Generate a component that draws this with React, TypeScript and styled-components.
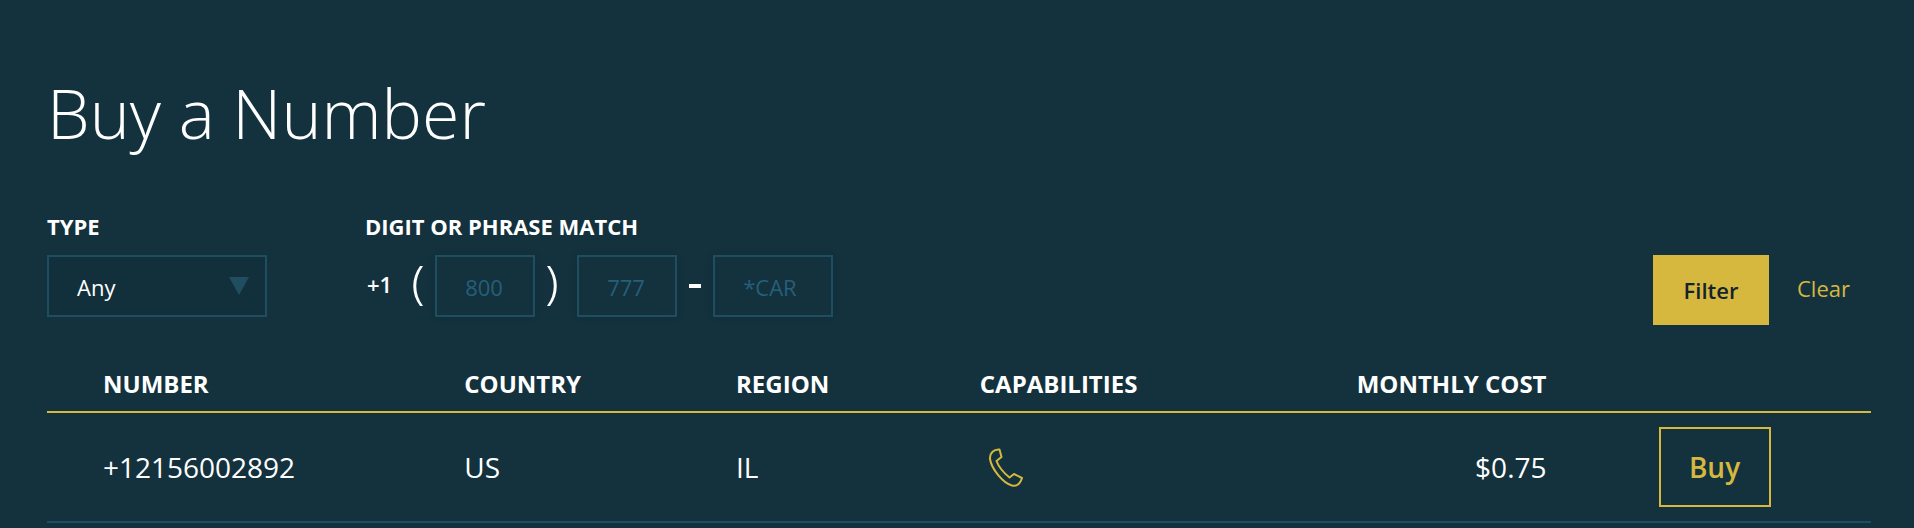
import React from 'react';
import styled, { createGlobalStyle } from 'styled-components';

const colors = {
  background: '#13323e',
  field: '#12303c',
  outline: '#1f4e61',
  placeholder: '#265f7a',
  accent: '#d6b83f',
  dark: '#14232d',
  text: '#ffffff',
};

const GlobalStyle = createGlobalStyle`
  *, *::before, *::after { box-sizing: border-box; }
  body {
    margin: 0;
    background: ${colors.background};
    color: ${colors.text};
    font-family: 'Open Sans', 'Noto Sans', sans-serif;
    font-size: 22px;
    line-height: 30px;
  }
  button, input, select { font: inherit; margin: 0; }
`;

const Page = styled.main`
  padding: 66px 43px 0 47px;
`;

const Title = styled.h1`
  margin: 0 0 51px;
  font-size: 68px;
  font-weight: 300;
  line-height: 94px;
`;

const FilterBar = styled.form`
  display: flex;
  align-items: flex-start;
  gap: 98px;
  margin-bottom: 42px;
`;

const Field = styled.div`
  display: flex;
  flex-direction: column;
  gap: 14px;
`;

const PhraseField = styled.fieldset`
  margin: 0;
  padding: 0;
  border: 0;
  min-width: 0;
`;

const Label = styled.label`
  font-weight: 700;
`;

const Legend = styled.legend`
  margin-bottom: 14px;
  padding: 0;
  font-weight: 700;
`;

const SelectBox = styled.div`
  display: grid;
  align-items: center;
  width: 220px;

  > * { grid-area: 1 / 1; }
`;

const Select = styled.select`
  width: 100%;
  height: 62px;
  padding: 2px 28px 0;
  appearance: none;
  border: 2px solid ${colors.outline};
  border-radius: 0;
  background: ${colors.field};
  color: ${colors.text};
`;

const Arrow = styled.svg`
  justify-self: end;
  margin-right: 18px;
  pointer-events: none;
`;

const PhraseRow = styled.div`
  display: flex;
  align-items: center;
  height: 62px;
`;

const Prefix = styled.span`
  margin-right: 21px;
  padding: 0 0 4px 2px;
  font-weight: 600;
`;

const Paren = styled.svg<{ $closing?: boolean }>`
  flex: none;
  margin: ${(p) => (p.$closing ? '0 20px 0 12px' : '0 12px 0 0')};
`;

const Dash = styled.span`
  width: 12px;
  height: 4px;
  margin: 0 12px;
  background: ${colors.text};
`;

const DigitInput = styled.input<{ $wide?: boolean }>`
  width: ${(p) => (p.$wide ? 120 : 100)}px;
  height: 62px;
  padding: 2px 28px 0;
  border: 2px solid ${colors.outline};
  border-radius: 0;
  background: transparent;
  box-shadow: 0 0 8px rgba(0, 0, 0, 0.12);
  color: ${colors.text};

  &::placeholder { color: ${colors.placeholder}; opacity: 1; }
`;

const Actions = styled.div`
  display: flex;
  align-items: center;
  gap: 28px;
  margin: 44px 21px 0 auto;
`;

const FilterButton = styled.button`
  min-width: 116px;
  height: 70px;
  padding: 0 28px;
  border: 0;
  background: ${colors.accent};
  color: ${colors.dark};
  font-weight: 600;
`;

const ClearLink = styled.a`
  padding-bottom: 4px;
  color: ${colors.accent};
  text-decoration: none;
`;

const Table = styled.table`
  width: 100%;
  border-collapse: separate;
  border-spacing: 0;
`;

const HeadCell = styled.th<{ $right?: boolean }>`
  padding: 0 56px 10px;
  border-bottom: 2px solid ${colors.accent};
  font-size: 24px;
  font-weight: 700;
  line-height: 34px;
  text-align: ${(p) => (p.$right ? 'right' : 'left')};
  white-space: nowrap;
`;

const Cell = styled.td<{ $right?: boolean }>`
  height: 110px;
  padding: 0 56px;
  border-bottom: 2px solid ${colors.outline};
  font-size: 28px;
  line-height: 38px;
  text-align: ${(p) => (p.$right ? 'right' : 'left')};
  vertical-align: middle;
  white-space: nowrap;

  &:last-child { padding-right: 58px; }
`;

const PhoneIcon = styled.svg`
  display: block;
  margin-left: 7px;
`;

const BuyButton = styled.button`
  display: block;
  min-width: 112px;
  height: 80px;
  padding: 0 28px;
  border: 2px solid ${colors.accent};
  background: transparent;
  color: ${colors.accent};
  font-weight: 600;
`;

const numbers = [{ number: '+12156002892', country: 'US', region: 'IL', cost: '$0.75' }];

export default function App() {
  return (
    <>
      <GlobalStyle />
      <Page>
        <Title>Buy a Number</Title>
        <FilterBar onSubmit={(e) => e.preventDefault()}>
          <Field>
            <Label htmlFor="type">TYPE</Label>
            <SelectBox>
              <Select id="type" defaultValue="any">
                <option value="any">Any</option>
              </Select>
              <Arrow width="20" height="18" viewBox="0 0 20 18" aria-hidden="true">
                <path d="M0 0H20L10 18Z" fill={colors.outline} />
              </Arrow>
            </SelectBox>
          </Field>
          <PhraseField>
            <Legend>DIGIT OR PHRASE MATCH</Legend>
            <PhraseRow>
              <Prefix>+1</Prefix>
              <Paren width="10" height="42" viewBox="0 0 10 42" fill={colors.text} aria-hidden="true">
                <path d="M7 1C-2 13 -2 29 7 41H10C1 29 1 13 10 1Z" />
              </Paren>
              <DigitInput aria-label="Area code" placeholder="800" />
              <Paren $closing width="10" height="42" viewBox="0 0 10 42" fill={colors.text} aria-hidden="true">
                <path d="M3 1C12 13 12 29 3 41H0C9 29 9 13 0 1Z" />
              </Paren>
              <DigitInput aria-label="Prefix" placeholder="777" />
              <Dash aria-hidden="true" />
              <DigitInput aria-label="Line number or phrase" placeholder="*CAR" $wide />
            </PhraseRow>
          </PhraseField>
          <Actions>
            <FilterButton type="submit">Filter</FilterButton>
            <ClearLink href="#">Clear</ClearLink>
          </Actions>
        </FilterBar>
        <Table>
          <thead>
            <tr>
              <HeadCell scope="col">NUMBER</HeadCell>
              <HeadCell scope="col">COUNTRY</HeadCell>
              <HeadCell scope="col">REGION</HeadCell>
              <HeadCell scope="col">CAPABILITIES</HeadCell>
              <HeadCell scope="col" $right>MONTHLY COST</HeadCell>
              <HeadCell as="td" />
            </tr>
          </thead>
          <tbody>
            {numbers.map((n) => (
              <tr key={n.number}>
                <Cell>{n.number}</Cell>
                <Cell>{n.country}</Cell>
                <Cell>{n.region}</Cell>
                <Cell>
                  <PhoneIcon width="37" height="40" viewBox="0 0 37 40" fill="none" stroke={colors.accent} strokeWidth="2" strokeLinejoin="round" role="img" aria-label="Voice">
                    <path d="M12.5 2.5C7 2 2.5 6 3 12C4.5 22 16 36 25 38.5C30 39.5 33.5 36 35 31L27 27L22.5 30.5C17.5 26.5 12 20.5 9.5 14L14.5 10Z" />
                  </PhoneIcon>
                </Cell>
                <Cell $right>{n.cost}</Cell>
                <Cell>
                  <BuyButton type="button">Buy</BuyButton>
                </Cell>
              </tr>
            ))}
          </tbody>
        </Table>
      </Page>
    </>
  );
}
